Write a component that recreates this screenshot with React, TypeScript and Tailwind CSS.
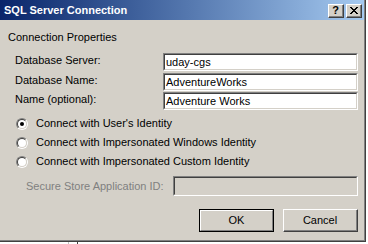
import React from "react";

function Sunken({ className, children }: { className: string; children?: React.ReactNode }) {
  return (
    <div className={`border border-t-[#808080] border-l-[#808080] border-r-white border-b-white ${className}`}>
      <div className="w-full h-full border border-t-[#404040] border-l-[#404040] border-r-[#d4d0c8] border-b-[#d4d0c8] flex items-center">
        {children}
      </div>
    </div>
  );
}

function TextBox({ value }: { value: string }) {
  return (
    <Sunken className="w-[195px] h-[18px] bg-white">
      <span className="pl-[1px] whitespace-nowrap">{value}</span>
    </Sunken>
  );
}

function Radio({ checked, label }: { checked?: boolean; label: string }) {
  return (
    <div className="h-[19px] flex items-center pl-[16px]">
      <div className="w-[12px] h-[12px] rounded-full border border-t-[#808080] border-l-[#808080] border-r-white border-b-white">
        <div className="w-full h-full rounded-full border border-t-[#404040] border-l-[#404040] border-r-[#d4d0c8] border-b-[#d4d0c8] bg-white flex items-center justify-center">
          {checked && <div className="w-[4px] h-[4px] rounded-full bg-black" />}
        </div>
      </div>
      <span className="ml-[8px] whitespace-nowrap">{label}</span>
    </div>
  );
}

function TitleButton({ children }: { children: React.ReactNode }) {
  return (
    <div className="w-[16px] h-[14px] bg-[#d4d0c8] border border-t-white border-l-white border-r-[#404040] border-b-[#404040] flex">
      <div className="flex-1 border-r border-b border-r-[#808080] border-b-[#808080] flex items-center justify-center">
        {children}
      </div>
    </div>
  );
}

export default function App() {
  return (
    <div className="w-[368px] h-[244px] bg-white overflow-hidden font-['Liberation_Sans',Arial,sans-serif] text-[11px] leading-[13px] text-black">
      <div className="w-[366px] h-[242px] border-r border-b border-r-[#404040] border-b-[#404040] flex">
        <div className="flex-1 bg-[#d4d0c8] border-r border-b border-r-[#808080] border-b-[#808080] flex flex-col">
          {/* Title bar */}
          <div className="h-[20px] bg-linear-to-r from-[#0a246a] to-[#a6caf0] flex items-center pl-[4px] pr-[2px]">
            <span className="text-white font-bold whitespace-nowrap">SQL Server Connection</span>
            <div className="ml-auto flex gap-[2px] mt-[2px]">
              <TitleButton>
                <span className="font-bold text-[11px] leading-[11px] mt-[-1px]">?</span>
              </TitleButton>
              <TitleButton>
                <svg width="8" height="7" viewBox="0 0 8 7">
                  <path d="M0 0h2v1h1v1h2V1h1V0h2v1H7v1H6v1H5v1h1v1h1v1h1v1H6V6H5V5H3v1H2v1H0V6h1V5h1V4h1V3H2V2H1V1H0z" fill="#000" />
                </svg>
              </TitleButton>
            </div>
          </div>

          {/* Content */}
          <div className="pl-[8px] pt-[11px]">
            <div className="whitespace-nowrap">Connection Properties</div>
          </div>

          <div className="mt-[9px] flex flex-col">
            <div className="flex items-start pl-[15px] mb-[2px]">
              <span className="w-[148px] pt-[1px] whitespace-nowrap">Database Server:</span>
              <TextBox value="uday-cgs" />
            </div>
            <div className="flex items-start pl-[15px] mb-[1px]">
              <span className="w-[148px] pt-[1px] whitespace-nowrap">Database Name:</span>
              <TextBox value="AdventureWorks" />
            </div>
            <div className="flex items-start pl-[15px]">
              <span className="w-[148px] pt-[1px] whitespace-nowrap">Name (optional):</span>
              <TextBox value="Adventure Works" />
            </div>
          </div>

          <div className="mt-[4px] flex flex-col">
            <Radio checked label="Connect with User's Identity" />
            <Radio label="Connect with Impersonated Windows Identity" />
            <Radio label="Connect with Impersonated Custom Identity" />
          </div>

          <div className="mt-[5px] flex items-center pl-[26px]">
            <span className="w-[147px] whitespace-nowrap text-[#808080]">Secure Store Application ID:</span>
            <Sunken className="w-[185px] h-[20px] bg-[#d4d0c8]" />
          </div>

          <div className="mt-[13px] flex justify-end gap-[9px] pr-[6px]">
            <div className="w-[75px] h-[23px] border border-black flex">
              <div className="flex-1 border border-t-white border-l-white border-r-[#808080] border-b-[#808080] flex items-center justify-center">
                OK
              </div>
            </div>
            <div className="w-[75px] h-[23px] border border-t-white border-l-white border-r-[#404040] border-b-[#404040] flex">
              <div className="flex-1 border-r border-b border-r-[#808080] border-b-[#808080] flex items-center justify-center">
                Cancel
              </div>
            </div>
          </div>
        </div>
      </div>
      <div className="flex h-[2px]">
        <div className="ml-[68px] w-px h-full bg-[#c0c0c0]" />
        <div className="ml-[8px] w-px h-full bg-[#404040]" />
      </div>
    </div>
  );
}
